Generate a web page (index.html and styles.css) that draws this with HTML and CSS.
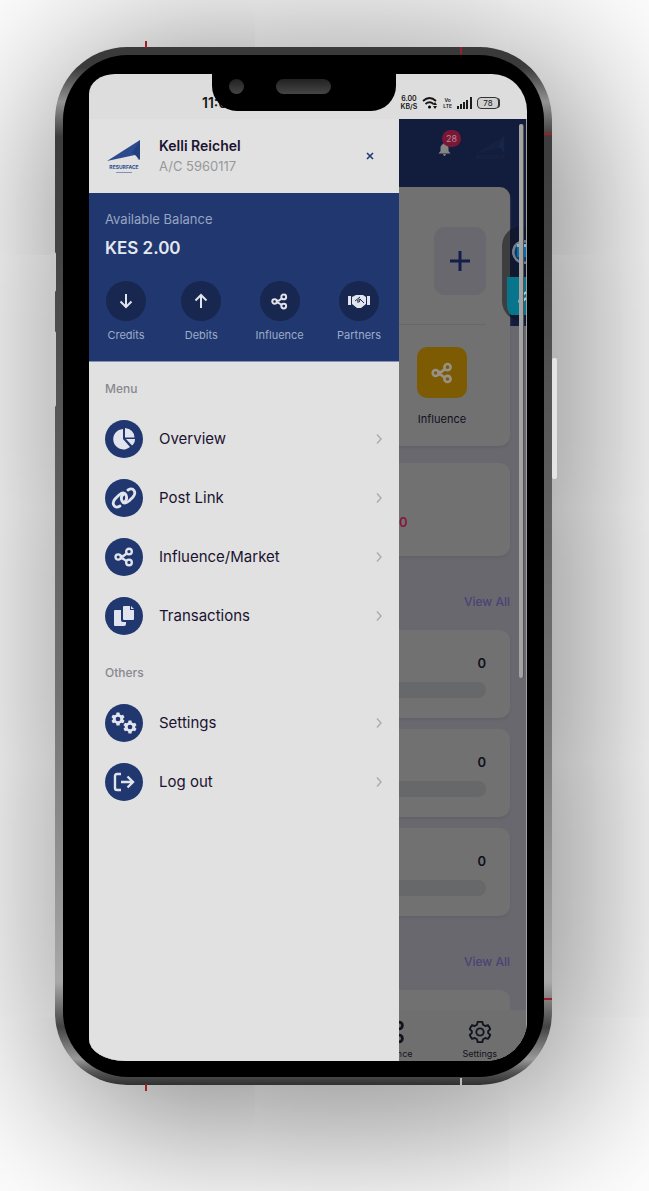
FILE: index.html
```html
<!DOCTYPE html>
<html lang="en">
<head>
<meta charset="utf-8">
<meta name="viewport" content="width=device-width, initial-scale=1">
<title>Resurface</title>
<link rel="stylesheet" href="styles.css">
</head>
<body>
<svg class="defs" aria-hidden="true">
  <symbol id="share" viewBox="0 0 24 24"><g fill="none" stroke="currentColor" stroke-width="2.800"><circle cx="5" cy="12" r="3.200"/><circle cx="18" cy="5.500" r="3.400"/><circle cx="18" cy="18.500" r="3.400"/><path d="M7.800 10.600 11 11l4.500-3.500M7.800 13.200l3.200 1 4 2.800"/></g></symbol>
  <symbol id="chevron" viewBox="0 0 10 16"><path d="M2.500 2.500 7.500 8l-5 5.500" fill="none" stroke="currentColor" stroke-width="1.800"/></symbol>
  <symbol id="logo" viewBox="0 0 34 24"><path d="M0 22 33 1v20l-5-5z" fill="currentColor"/><path d="M33 1 25 14l5 3 1 4 2-1z" fill="#17306c" opacity=".45"/></symbol>
  <symbol id="gear" viewBox="0 0 24 24"><path fill-rule="evenodd" d="M9.500 1h5l.8 3.200 2.300 1.300 3.200-.9 2.400 4.200L20.800 11v2l2.400 2.200-2.400 4.200-3.200-.9-2.300 1.300-.8 3.200h-5l-.8-3.200-2.300-1.300-3.200.9-2.400-4.200L3.200 13v-2L.8 8.800l2.400-4.200 3.200.9 2.300-1.300zM12 8a4 4 0 1 0 0 8 4 4 0 0 0 0-8z"/></symbol>
</svg>
<main class="device">
  <span class="key key-up"></span><span class="key key-down"></span><span class="key key-power"></span>
  <span class="mark mark-v m1"></span><span class="mark mark-v m2"></span><span class="mark mark-h m3"></span><span class="mark mark-h m4"></span><span class="mark mark-v m5"></span><span class="mark mark-v m6"></span>
  <div class="bezel">
    <div class="screen">
      <header class="status">
        <span class="time">11:03</span>
        <div class="signals">
          <span class="rate">6.00<br>KB/S</span>
          <svg width="16" height="14" viewBox="0 0 16 14"><g fill="none" stroke="#151515" stroke-width="1.800"><path d="M1 5q6.500-6 13 0M3.500 8q4-3.500 8 0"/></g><circle cx="7.500" cy="11" r="1.500"/><path d="m13 6 2 3h-4zM13 13l-2-3h4z" fill="#151515"/></svg>
          <span class="volte">Vo<br>LTE</span>
          <svg width="15" height="12" viewBox="0 0 15 12"><path d="M0 9h2v3H0zM3 7h2v5H3zM6 5h2v7H6zM9 3h2v9H9zM13 0h2v12h-2z" fill="#1c1c1c"/></svg>
          <span class="battery">78</span>
        </div>
      </header>
      <div class="notch"><span class="camera"></span><span class="speaker"></span></div>
      <div class="stage">
        <section class="app">
          <div class="topbar">
            <button class="bell" aria-label="Notifications"><svg width="13" height="14" viewBox="0 0 13 14"><path d="M5.500 1h2v1c2 .5 3 2 3 4v3l2 2.500H.5l2-2.500V6c0-2 1-3.500 3-4zM5 12h3q-.5 2-1.500 2T5 12z" fill="#858585"/></svg><span class="count">28</span></button>
            <span class="faint"><svg width="30" height="20"><use href="#logo"/></svg><small>RESURFACE</small></span>
          </div>
          <div class="cards">
            <div class="card wallet">
              <div class="wallet-top"><button class="plus" aria-label="Add"><svg width="20" height="20" viewBox="0 0 20 20"><path d="M10 0v20M0 10h20" stroke="#151e48" stroke-width="3"/></svg></button></div>
              <a class="tile" href="#influence"><span class="tile-icon"><svg width="22" height="22"><use href="#share"/></svg></span>Influence</a>
            </div>
            <div class="card income"><span>0</span></div>
            <div class="more"><a href="#all">View All</a></div>
            <div class="card goal"><b>0</b><span class="bar"></span></div>
            <div class="card goal"><b>0</b><span class="bar"></span></div>
            <div class="card goal"><b>0</b><span class="bar"></span></div>
            <div class="more"><a href="#all2">View All</a></div>
            <div class="card stub"></div>
          </div>
          <nav class="tabs">
            <a class="tab" href="#inf"><svg width="24" height="24"><use href="#share"/></svg>Influence</a>
            <a class="tab" href="#set"><svg class="line-gear" width="24" height="24" viewBox="-1 -1 26 26"><use href="#gear" width="24" height="24"/></svg>Settings</a>
          </nav>
          <div class="bubble"><svg width="24" height="96" viewBox="0 0 24 96"><circle cx="22" cy="26" r="12" fill="#777e89"/><circle cx="22" cy="26" r="9.500" fill="#0a3e68"/><path d="M15 20h9v11h-9z" fill="#0a6ca8"/><path d="M15 18h9v3h-9z" fill="#7eb2cd"/><path d="M5 51h19v38H9q-4-4-4-9z" fill="#07768c"/><path d="M17 75q6-10 9-9M17 75q1 4 7-3" fill="none" stroke="#b6d5da" stroke-width="2"/></svg></div>
          <span class="scroller"></span>
        </section>
        <aside class="drawer">
          <div class="profile">
            <span class="brand"><svg width="34" height="24"><use href="#logo"/></svg><b>RESURFACE</b><i></i></span>
            <div class="who"><strong>Kelli Reichel</strong><span>A/C 5960117</span></div>
            <button class="close" aria-label="Close"><svg width="8" height="8" viewBox="0 0 8 8"><path d="m1 1 6 6M7 1 1 7" stroke="#213a72" stroke-width="1.600"/></svg></button>
          </div>
          <div class="balance">
            <p>Available Balance</p>
            <h1>KES 2.00</h1>
            <div class="actions">
              <a href="#credits"><span><svg width="16" height="16" viewBox="0 0 16 16"><path d="M8 1v13M2.500 8.500 8 14l5.500-5.500" fill="none" stroke="currentColor" stroke-width="2"/></svg></span>Credits</a>
              <a href="#debits"><span><svg width="16" height="16" viewBox="0 0 16 16"><path d="M8 15V2M2.500 7.500 8 2l5.500 5.500" fill="none" stroke="currentColor" stroke-width="2"/></svg></span>Debits</a>
              <a href="#influence"><span><svg width="17" height="17"><use href="#share"/></svg></span>Influence</a>
              <a href="#partners"><span><svg width="22" height="14" viewBox="0 0 22 14"><path fill="currentColor" d="M0 2h3v9H0zM19 2h3v9h-3zM4 3l4-2h7l3 2v7l-5 4H9l-5-4z"/><path d="m7 7 5-4M9 7l3-2 4 4M9 8q3 1 3-2" fill="none" stroke="#17274f" stroke-width="1"/></svg></span>Partners</a>
            </div>
          </div>
          <h2>Menu</h2>
          <nav class="menu">
            <a href="#overview"><span class="disc"><svg width="24" height="24" viewBox="0 0 24 24"><path fill="currentColor" d="M11 2v10l7 8A10.200 10.200 0 1 1 11 2zM13 1q9 1 9.500 9.500H13zM14 12h9q0 4-3 6.500z"/></svg></span>Overview<svg class="go"><use href="#chevron"/></svg></a>
            <a href="#post"><span class="disc"><svg width="26" height="24" viewBox="0 0 26 24"><g fill="none" stroke="currentColor" stroke-width="2.800" stroke-linecap="round"><path d="M9 20q-4 2.500-6-.5T4 13l4-4q5-4 7 0 2 5-2 7"/><path d="M17 4q4-2.500 6 .5T22 11l-4 4q-5 4-7 0-2-5 2-7"/></g></svg></span>Post Link<svg class="go"><use href="#chevron"/></svg></a>
            <a href="#market"><span class="disc"><svg width="20" height="20"><use href="#share"/></svg></span>Influence/Market<svg class="go"><use href="#chevron"/></svg></a>
            <a href="#transactions"><span class="disc"><svg width="22" height="22" viewBox="0 0 22 22"><path fill="currentColor" d="M2 5h6v10q0 2 2 2h3v2q0 2-2 2H2q-1 0-1-1V6q0-1 1-1zM11 1h6v4h4v9q0 1-1 1h-9q-1 0-1-1V2q0-1 1-1zM18 1l3 3h-3z"/></svg></span>Transactions<svg class="go"><use href="#chevron"/></svg></a>
          </nav>
          <h2>Others</h2>
          <nav class="menu">
            <a href="#settings"><span class="disc"><svg width="28" height="24" viewBox="0 0 28 24" fill="currentColor"><use href="#gear" x="1" y="1" width="14" height="14"/><use href="#gear" x="13" y="9" width="14" height="14"/></svg></span>Settings<svg class="go"><use href="#chevron"/></svg></a>
            <a href="#logout"><span class="disc"><svg width="22" height="20" viewBox="0 0 22 20"><path d="M8 2H4Q2 2 2 4v12q0 2 2 2h4M8 10h12M14.500 4.500 20 10l-5.500 5.500" fill="none" stroke="currentColor" stroke-width="2.400"/></svg></span>Log out<svg class="go"><use href="#chevron"/></svg></a>
          </nav>
        </aside>
      </div>
    </div>
  </div>
</main>
</body>
</html>
```
FILE: styles.css
```css
* { box-sizing: border-box; }
body { margin: 0; padding: 47px 97px 106px 55px; background: #fff; font-family: Inter, "Noto Sans", sans-serif; overflow-x: hidden; }
a { color: inherit; text-decoration: none; }
button { border: 0; padding: 0; background: none; font: inherit; }
h1, h2, p { margin: 0; }
svg { display: block; flex: none; }
.defs { position: absolute; width: 0; height: 0; }

.device { position: relative; padding: 8px; border-radius: 72px; background: linear-gradient(#3a3a3a 0, #3a3a3a 20px, #929292 55px, #3c3c3c 90px, #444 200px, #555 350px, #727272 650px, #a8a8a8 935px, #444 980px, #999 1012px, #555 1025px, #303030 100%); box-shadow: 14px 20px 170px 12px rgba(0, 0, 0, .52); }
.bezel { padding: 19px 17px 16px 26px; border-radius: 65px; background: #000; }
.screen { position: relative; overflow: hidden; border-radius: 26px 35px 42px 36px / 20px 37px 40px 22px; background: #ddd; }
.key { position: absolute; width: 5px; background: #c8c8c8; border-radius: 2px; }
.key-up { left: -4px; top: 205px; height: 40px; }
.key-down { left: -4px; top: 284px; height: 76px; }
.key-power { right: -5px; top: 311px; height: 121px; background: #e4e4e4; }
.mark { position: absolute; background: #9c2026; }
.mark-v { width: 2px; height: 7px; }
.mark-h { width: 8px; height: 2px; right: 0; }
.m1 { left: 90px; top: -6px; }
.m2 { right: 90px; top: 0; }
.m3 { top: 86px; }
.m4 { top: 951px; }
.m5 { left: 90px; bottom: -6px; }
.m6 { right: 90px; bottom: 0; background: #bbb; }

.status { display: flex; justify-content: space-between; height: 45px; padding: 14px 28px 0 113px; color: #151515; }
.time { font-size: 14px; line-height: 30px; font-weight: 600; }
.signals { display: flex; align-items: center; gap: 5px; height: 30px; }
.rate, .volte { font-weight: 600; text-align: center; }
.rate { font-size: 7px; line-height: 8px; }
.volte { font-size: 5px; line-height: 6px; }
.battery { border: 1px solid #333; border-radius: 4px; width: 22px; font-size: 8px; line-height: 10px; text-align: center; background: #d0d0d0; box-shadow: 2px 0 0 -1px #333; }
.notch { position: absolute; top: 0; left: 28%; width: 42%; height: 37px; border-radius: 0 0 25px 25px; background: #000; }
.camera, .speaker { position: absolute; background: linear-gradient(#222, #454545); }
.camera { left: 17px; top: 5px; width: 15px; height: 15px; border-radius: 50%; }
.speaker { left: 64px; top: 5px; width: 55px; height: 15px; border-radius: 8px; }

.stage { position: relative; }
.app { position: relative; background: linear-gradient(#121d3d 207px, #69686e 207px); border-right: 1px solid #a0a0a4; }
.topbar { display: flex; justify-content: flex-end; gap: 25px; height: 68px; padding: 16px 19px 0 0; }
.bell { position: relative; width: 13px; height: 28px; padding-bottom: 1px; }
.count { position: absolute; left: 4px; top: -5px; width: 19px; height: 17px; border-radius: 9px; background: #7b1736; color: #b78a97; font-size: 9px; line-height: 17px; text-align: center; }
.faint { width: 31px; color: #18233f; }
.faint svg { opacity: .7; }
.faint small { display: block; font-size: 5px; line-height: 5px; font-weight: 700; }
.cards { padding: 0 16px; }
.card { border-radius: 10px; background: #717171; box-shadow: 0 2px 2px #626267; }
.wallet { height: 259px; padding: 40px 24px 0; }
.wallet-top { display: flex; justify-content: flex-end; height: 98px; border-bottom: 1px solid #67676b; }
.plus { display: grid; place-items: center; width: 52px; height: 68px; border-radius: 10px; background: #69686f; }
.tile { display: flex; flex-direction: column; align-items: center; width: 50px; margin: 22px 19px 0 auto; font-size: 11px; line-height: 14px; color: #11101f; }
.tile-icon { display: grid; place-items: center; width: 50px; height: 51px; margin-bottom: 14px; border-radius: 10px; background: #7d5b03; color: #989187; }
.income { height: 93px; margin-top: 17px; padding: 47px 0 0 294px; color: #85183a; font-size: 13px; line-height: 24px; font-weight: 600; }
.more { display: flex; justify-content: flex-end; align-items: center; height: 74px; padding-top: 18px; color: #4b4276; font-size: 12px; line-height: 20px; font-weight: 500; }
.goal { height: 88px; padding: 24px 24px 0; color: #10101c; text-align: right; }
.goal + .goal { margin-top: 11px; }
.goal b { display: block; font-size: 13px; line-height: 18px; font-weight: 600; }
.bar { display: block; height: 16px; margin-top: 10px; border-radius: 8px; background: #66686a; }
.stub { height: 20px; border-radius: 10px 10px 0 0; box-shadow: none; }
.tabs { display: flex; justify-content: flex-end; gap: 50px; height: 51px; padding: 10px 29px 0 0; background: #6f6f6f; color: #131320; }
.tab { display: flex; flex-direction: column; align-items: center; gap: 4px; font-size: 9px; line-height: 12px; }
.line-gear { fill: none; stroke: currentColor; stroke-width: 2; stroke-linejoin: round; }
.bubble { position: absolute; right: 0; top: 107px; width: 24px; height: 95px; overflow: hidden; border-radius: 20px 0 0 20px; background: linear-gradient(90deg, #3e3e40 8px, #10182f 8px); }
.scroller { position: absolute; right: 3px; top: 5px; width: 4px; height: 554px; border-radius: 2px; background: #a4a4a4; box-shadow: 1px 0 #515151; }

.drawer { position: absolute; top: 0; bottom: 0; left: 0; width: min(310px, 85%); background: #e1e1e1; color: #1a1330; }
.profile { display: flex; align-items: center; height: 74px; padding: 0 25px 0 18px; }
.brand { width: 34px; margin-right: 18px; color: #2c4b8f; }
.brand b { display: block; font-size: 5px; line-height: 8px; text-align: center; }
.brand i { display: block; width: 16px; height: 1px; margin: 1px auto 0; background: #8292b5; }
.who { display: flex; flex-direction: column; flex: 1; font-size: 14px; line-height: 20px; }
.who strong { font-weight: 600; }
.who span { font-size: 13px; color: #98989a; }
.balance { height: 169px; padding: 16px 18px 0 16px; background: #20386f; border-bottom: 1px solid #8594b5; color: #98a4c2; }
.balance p { font-size: 13px; line-height: 20px; }
.balance h1 { font-size: 17px; line-height: 24px; margin-top: 7px; color: #e4e7ef; font-weight: 600; }
.actions { display: flex; justify-content: space-between; margin-top: 21px; }
.actions a { display: flex; flex-direction: column; align-items: center; min-width: 42px; font-size: 11px; line-height: 14px; color: #9eabc8; }
.actions span { display: grid; place-items: center; width: 40px; height: 40px; margin-bottom: 7px; border-radius: 50%; background: #17274f; color: #e1e4ec; }
.drawer h2 { padding: 16px 16px 11px; font-size: 12px; line-height: 22px; font-weight: 500; color: #89888f; }
.menu { display: flex; flex-direction: column; gap: 21px; padding: 9px 16px 11px; }
.menu a { display: flex; align-items: center; height: 38px; font-size: 15px; line-height: 20px; }
.disc { display: grid; place-items: center; width: 38px; height: 38px; margin-right: 16px; border-radius: 50%; background: #20386f; color: #e1e4ec; }
.go { width: 8px; height: 14px; margin-left: auto; color: #acacae; }
```
